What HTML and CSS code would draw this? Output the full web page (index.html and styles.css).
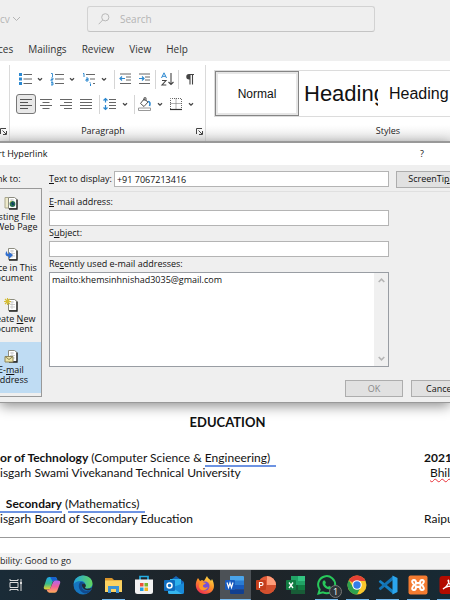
FILE: index.html
```html
<!DOCTYPE html>
<html lang="en">
<head>
<meta charset="utf-8">
<title>Insert Hyperlink</title>
<link rel="stylesheet" href="styles.css">
</head>
<body>
<svg width="0" height="0" class="defs" aria-hidden="true">
  <defs>
    <symbol id="chev" viewBox="0 0 6 5"><path d="M1 1.2l2 2 2-2" fill="none" stroke="#444" stroke-width="1.3"/></symbol>
    <symbol id="launch" viewBox="0 0 7 7"><path d="M.5 6V.5H6M2.5 2.5l3.500 3.500M6.500 3v3.500H3" fill="none" stroke="#444"/></symbol>
    <symbol id="page" viewBox="0 0 14 14"><path d="M4.500 1.500h6l2.500 2v9H4.500z" fill="#fff" stroke="#8c8c80"/><path d="M13 3.500V13H5" fill="none" stroke="#222" stroke-width="1.300"/><path d="M6 4h4M6 6.500h5M6 9h5M8 3v8" stroke="#bbb" stroke-width=".7"/></symbol>
  </defs>
</svg>
<div class="screen">
  <header class="titlebar">
    <div class="titlebar-row">
      <span class="doc-name">cv <svg width="9" height="6" viewBox="0 0 9 6"><path d="M1 1l3.500 3.500L8 1" fill="none" stroke="#b4b4b4"/></svg></span>
      <label class="search">
        <svg width="12" height="12" viewBox="0 0 12 12"><circle cx="7.300" cy="4.300" r="3.600" fill="none" stroke="#b8b8b8"/><path d="M4.700 7L.7 11.200" stroke="#b8b8b8"/></svg>
        <input type="search" placeholder="Search" aria-label="Search">
      </label>
    </div>
    <nav class="tabs">
      <a href="#">ces</a><a href="#">Mailings</a><a href="#">Review</a><a href="#">View</a><a href="#">Help</a>
    </nav>
  </header>

  <section class="ribbon">
    <div class="group-edge"><svg width="7" height="7"><use href="#launch"/></svg></div>
    <div class="group paragraph">
      <div class="tools">
        <button class="split" aria-label="Bullets"><svg width="14" height="14" viewBox="0 0 14 14"><path d="M1 1h3v3H1zM1 5.500h3v3H1zM1 10h3v3H1z" fill="#2b88d0"/><path d="M5.500 2.500H14M5.500 7H14M5.500 11.500H14" stroke="#666"/></svg><svg width="6" height="5"><use href="#chev"/></svg></button>
        <button class="split" aria-label="Numbering"><svg width="14" height="14" viewBox="0 0 14 14"><path d="M1 1.500h1.500V5M1 6h2v1.500H1V9h2M1 10.500h2V13H1M1 12h2" fill="none" stroke="#2b88d0" stroke-width=".9"/><path d="M5 2.500h9M5 7h9M5 11.500h9" stroke="#666"/></svg><svg width="6" height="5"><use href="#chev"/></svg></button>
        <button class="split" aria-label="Multilevel list"><svg width="14" height="14" viewBox="0 0 14 14"><path d="M1 1.500h1V5M4 6h2v3H4V7.500h2M8 10v.8M8.500 11.500V14" fill="none" stroke="#2b88d0"/><path d="M4 2.500h9M8 7h5M11 11.500h2" stroke="#666"/></svg><svg width="6" height="5"><use href="#chev"/></svg></button>
        <i class="sep"></i>
        <button aria-label="Decrease indent"><svg width="14" height="14" viewBox="0 0 14 14"><path d="M1 2h11M7 5h5M7 8h5M1 11.500h11" stroke="#666"/><path d="M6 6.500H1M3 4.500l-2 2 2 2" fill="none" stroke="#2b88d0" stroke-width="1.200"/></svg></button>
        <button aria-label="Increase indent"><svg width="14" height="14" viewBox="0 0 14 14"><path d="M2 2h11M8 5h5M8 8h5M2 11.500h11" stroke="#666"/><path d="M2 6.500h5M5 4.500l2 2-2 2" fill="none" stroke="#2b88d0" stroke-width="1.200"/></svg></button>
        <i class="sep"></i>
        <button aria-label="Sort"><svg width="14" height="14" viewBox="0 0 14 14"><path d="M1.500 6L4 .8 6.500 6M2.300 4.300h3.400" fill="none" stroke="#2b88d0"/><path d="M2 8.500h4L2 13h4.300M11 1v11.500M8.500 10l2.500 2.500 2.500-2.500" fill="none" stroke="#444" stroke-width="1.100"/></svg></button>
        <i class="sep"></i>
        <button class="pilcrow" aria-label="Show marks"><svg width="10" height="12" viewBox="0 0 10 12"><path d="M5 1.500v10M7.500 1.500v10M4 1.500h5" fill="none" stroke="#444" stroke-width="1.100"/><path d="M5 1H4a2.600 2.600 0 0 0 0 5.500h1z" fill="#444"/></svg></button>
      </div>
      <div class="tools tools-second">
        <div class="aligns">
          <button class="on" aria-label="Align left"><svg width="12" height="12" viewBox="0 0 12 12"><path d="M0 1.500h12M0 4.500h8M0 7.500h12M0 10.500h8" stroke="#555"/></svg></button>
          <button aria-label="Center"><svg width="12" height="12" viewBox="0 0 12 12"><path d="M0 1.500h12M2.500 4.500h7M0 7.500h12M2.500 10.500h7" stroke="#666"/></svg></button>
          <button aria-label="Align right"><svg width="12" height="12" viewBox="0 0 12 12"><path d="M0 1.500h12M4 4.500h8M0 7.500h12M4 10.500h8" stroke="#666"/></svg></button>
          <button aria-label="Justify"><svg width="12" height="12" viewBox="0 0 12 12"><path d="M0 1.500h12M0 4.500h12M0 7.500h12M0 10.500h12" stroke="#666"/></svg></button>
        </div>
        <i class="sep"></i>
        <button class="split" aria-label="Line spacing"><svg width="14" height="14" viewBox="0 0 14 14"><path d="M2.500 1.500v4M2.500 8v4.500M.5 3.500l2-2 2 2M.5 10.500l2 2 2-2" fill="none" stroke="#2b88d0" stroke-width="1.200"/><path d="M6 2.500h7M6 5.500h7M6 8.500h7M6 11.500h7" stroke="#666"/></svg><svg width="6" height="5"><use href="#chev"/></svg></button>
        <i class="sep"></i>
        <button class="split" aria-label="Shading"><svg width="14" height="14" viewBox="0 0 14 14"><path d="M6 2L2.500 6.500 6 9.500l4-4.500zM6 4V.8h2V4" fill="none" stroke="#555"/><path d="M10 4.500c2 0 2.500 2 1.500 4.500" fill="none" stroke="#2b88d0" stroke-width="1.600"/><path d="M.5 11h12v2.500H.5z" fill="#fff" stroke="#999"/></svg><svg width="6" height="5"><use href="#chev"/></svg></button>
        <button class="split" aria-label="Borders"><svg width="14" height="14" viewBox="0 0 14 14"><path d="M1.500 12V1.500h11V12M7 1.500V12M1.500 6.500h11" fill="none" stroke="#666" stroke-dasharray="1 1"/><path d="M1 12.500h12" stroke="#333" stroke-width="1.200"/></svg><svg width="6" height="5"><use href="#chev"/></svg></button>
      </div>
      <div class="caption"><span>Paragraph</span><svg width="7" height="7"><use href="#launch"/></svg></div>
    </div>
    <div class="group styles">
      <div class="gallery">
        <button class="style normal">Normal</button>
        <button class="style h1">Heading</button>
        <button class="style h2">Heading</button>
      </div>
      <div class="caption styles-caption"><span>Styles</span></div>
    </div>
  </section>

  <section class="dialog" role="dialog" aria-label="Insert Hyperlink">
    <div class="dialog-title"><span>rt Hyperlink</span><button aria-label="Help">?</button></div>
    <div class="dialog-body">
      <div class="side">
        <div class="side-label">Link to:</div>
        <div class="places">
          <button><svg width="14" height="14" viewBox="0 0 14 14"><path d="M1 1.500h3l1 1h5V12H1z" fill="#eeeacb" stroke="#aaa78c"/><use href="#page"/><circle cx="8.500" cy="8" r="2.900" fill="#2a7050"/><path d="M7 6l2 .5 1.500 2-2 1z" fill="#113a68"/><path d="M5.700 6.500l2-1.500" stroke="#cdd54b"/></svg><span>Existing File<br>or Web Page</span></button>
          <button><svg width="14" height="14" viewBox="0 0 14 14"><use href="#page"/><path d="M3 4C0 7 2 10 5 9.500V12l4-4-4-3v2C3.500 7.500 3 6 3 4z" fill="#2f6ed0"/></svg><span>Pl<u>a</u>ce in This<br>Document</span></button>
          <button><svg width="14" height="14" viewBox="0 0 14 14"><use href="#page"/><path d="M3.500 0v7M0 3.500h7M1 1l5 5M6 1L1 6" stroke="#d5bd35" stroke-width="1.100"/></svg><span>Create <u>N</u>ew<br>Document</span></button>
          <button class="current"><svg width="14" height="14" viewBox="0 0 14 14"><use href="#page"/><path d="M1 7.500h8V13H1z" fill="#eee5a8" stroke="#8d865b"/><path d="M1 7.500l4 3 4-3" fill="none" stroke="#8d865b"/></svg><span>E-<u>m</u>ail<br>Address</span></button>
        </div>
      </div>
      <form class="form">
        <div class="display-row">
          <label for="display"><u>T</u>ext to display:</label>
          <input id="display" type="text" value="+91 7067213416">
          <div class="tip"><button type="button">ScreenTi<u>p</u>...</button></div>
        </div>
        <div class="fields">
          <label for="email"><u>E</u>-mail address:</label>
          <input id="email" type="text">
          <label for="subject">S<u>u</u>bject:</label>
          <input id="subject" type="text">
          <label id="recent">Re<u>c</u>ently used e-mail addresses:</label>
          <div class="listbox">
            <ul role="listbox" aria-labelledby="recent"><li role="option">mailto:khemsinhnishad3035@gmail.com</li></ul>
            <div class="scroll"><svg width="7" height="5" viewBox="0 0 7 5"><path d="M.7 4l2.800-2.800L6.300 4" fill="none" stroke="#b5b5b5" stroke-width="1.600"/></svg><svg width="7" height="5" viewBox="0 0 7 5"><path d="M.7 1l2.800 2.800L6.300 1" fill="none" stroke="#b5b5b5" stroke-width="1.600"/></svg></div>
          </div>
        </div>
        <div class="actions"><button type="button" disabled>OK</button><button type="button">Cancel</button></div>
      </form>
    </div>
  </section>

  <main class="document">
    <h1>EDUCATION</h1>
    <div class="entry">
      <div class="line"><span><b>or of Technology</b> (Computer Science &amp; <span class="gram">Engineering)&nbsp; </span></span><b class="when">2021</b></div>
      <div class="line"><span>isgarh Swami Vivekanand Technical University</span><span class="where"><span class="spell">Bhilai</span></span></div>
    </div>
    <div class="entry">
      <div class="line"><span><b class="gram">&nbsp; Secondary</b> (<span class="gram">Mathematics)&nbsp; </span></span></div>
      <div class="line"><span>isgarh Board of Secondary Education</span><span class="when">Raipur</span></div>
    </div>
  </main>
  <footer class="status">bility: Good to go</footer>

  <nav class="taskbar">
    <button aria-label="Task view"><svg width="16" height="16" viewBox="0 0 16 16"><path d="M2 5.500h8v5H2zM2 2v1.500h8V2M2 14v-1.500h8V14M13 2v3M13 8v6" fill="none" stroke="#ddd"/><path d="M12 5h2v2.500h-2z" fill="#ddd"/></svg></button>
    <button aria-label="Copilot"><svg width="18" height="18" viewBox="0 0 20 20"><defs><linearGradient id="c1" x2="0" y2="1"><stop stop-color="#20a5ee"/><stop offset=".55" stop-color="#38bd87"/><stop offset="1" stop-color="#f5d22e"/></linearGradient><linearGradient id="c2" x2="0" y2="1"><stop stop-color="#ae65ef"/><stop offset=".5" stop-color="#f0619a"/><stop offset="1" stop-color="#ffab59"/></linearGradient></defs><path d="M7 1h6q2 0 2.500 2l.5 2h-3q-2 0-2.500 2L9 12q-1 3-3 3H3c-2 0-2.500-1.500-2-3L4 3q.8-2 3-2z" fill="url(#c1)"/><path d="M8 1h5q2 0 2.500 2l.5 2h-3q-1.500 0-2.500 1z" fill="#1861cf"/><path d="M14 5h2.500C19 5 19.500 6.500 19 8l-3 8q-1 2.500-3 2.500H7q-2 0-2.500-2L4 15h2q2 0 3-3l2-5q.7-2 3-2z" fill="url(#c2)"/></svg></button>
    <button aria-label="Edge"><svg width="20" height="20" viewBox="0 0 20 20"><defs><linearGradient id="e1"><stop stop-color="#21a3df"/><stop offset="1" stop-color="#62d65f"/></linearGradient></defs><circle cx="10" cy="10" r="9.500" fill="#1675bf"/><path d="M.6 9.500C1 4 5 .5 10 .5c6 0 9.500 4 9.500 8 0 3.500-2.500 5-5.500 5-2.500 0-3-1-2-2 1.500-3-1-5.500-4-5.500C4 6 1.500 7.500.6 9.500z" fill="url(#e1)"/><path d="M7.500 7C4 10 6 17 12 18.500c3 0 5-1.500 6-3.500-5 2-10 0-9-5 .2-1 1-1.700 2-2-1-1-2.500-1.300-3.500-1z" fill="#114a8d"/><path d="M9 9.500c-.5 4 4 7 9 5 .8-1 1-2 1-2-2 1.500-7 1.700-7 0 1.500-1 1-3-.500-4-1 0-2 .4-2.500 1z" fill="#202a33"/></svg></button>
    <button class="open" aria-label="Explorer"><svg width="20" height="20" viewBox="0 0 20 20"><path d="M2 3h7l2 2h8v3H2z" fill="#d9952b"/><path d="M2 5.500h17V17H2z" fill="#fbd262"/><path d="M5 11h11v7h-3v-4H8v4H5z" fill="#3b93d7"/></svg></button>
    <button aria-label="Store"><svg width="20" height="20" viewBox="0 0 20 20"><path d="M6 5V1.500h8V5" fill="none" stroke="#24afe5" stroke-width="1.700"/><path d="M1 4.500h18v12q0 2.500-2.500 2.500h-13Q1 19 1 16.500z" fill="#f2f2f2"/><path d="M6 8h3.500v3.500H6z" fill="#ec5238"/><path d="M10.500 8H14v3.500h-3.500z" fill="#7bb72f"/><path d="M6 12.500h3.500V16H6z" fill="#219ee1"/><path d="M10.500 12.500H14V16h-3.500z" fill="#f3b520"/></svg></button>
    <button aria-label="Outlook"><svg width="20" height="20" viewBox="0 0 20 20"><path d="M4 7l8-6 8 6v10q0 2-2 2H6q-2 0-2-2z" fill="#1465b7"/><path d="M6 4h11v9H6z" fill="#2db1ec"/><path d="M4 14l16-6v9q0 2-2 2H6q-2 0-2-2z" fill="#198bd9"/><path d="M4 10l14 9H6q-2 0-2-2z" fill="#36b6ee"/><rect y="5" width="11" height="11" rx="1" fill="#0f6cbd"/><circle cx="5.500" cy="10.500" r="2.500" fill="none" stroke="#fff" stroke-width="1.500"/></svg></button>
    <button aria-label="Firefox"><svg width="20" height="20" viewBox="0 0 20 20"><defs><linearGradient id="f1" x1=".8" y1="0" x2=".2" y2="1"><stop stop-color="#ffe34b"/><stop offset=".45" stop-color="#ff9227"/><stop offset="1" stop-color="#ed2455"/></linearGradient></defs><path d="M3 3l2 3 2-1 2 1 3-5c1 3 3 3 4 5l1-2c4 7 2 15-7 15C2 19-2 11 3 3z" fill="url(#f1)"/><circle cx="10" cy="11" r="4.500" fill="#7651d9"/><path d="M5 7c3-1 4 1 6 1-1 2-3 1-3 3 0 2 3 2 5 1-2 5-9 4-9-1z" fill="#ff9829"/></svg></button>
    <button class="open active" aria-label="Word"><svg width="20" height="20" viewBox="0 0 20 20"><path d="M5 1h13q1 0 1 1v4H5z" fill="#4aa4eb"/><path d="M5 5.500h14V10H5z" fill="#2b7cd3"/><path d="M5 10h14v4.500H5z" fill="#185abd"/><path d="M5 14.500h14V18q0 1-1 1H6q-1 0-1-1z" fill="#103f91"/><rect y="5" width="10" height="10" rx="1" fill="#185abd"/><path d="M2 7.500l1.500 5L5 8l1.500 4.500 1.500-5" fill="none" stroke="#fff" stroke-width="1.200"/></svg></button>
    <button aria-label="PowerPoint"><svg width="20" height="20" viewBox="0 0 20 20"><circle cx="11" cy="10" r="9" fill="#e45b38"/><path d="M11 1a9 9 0 0 1 9 9h-9z" fill="#ff9d7a"/><path d="M2 10h18a9 9 0 0 1-18 0" fill="#d3502e"/><rect y="5" width="10" height="10" rx="1" fill="#c43e1c"/><path d="M3.500 13V7.500h2q1.500 0 1.500 1.500t-1.500 1.500h-2" fill="none" stroke="#fff" stroke-width="1.200"/></svg></button>
    <button aria-label="Excel"><svg width="20" height="20" viewBox="0 0 20 20"><path d="M5 1h14v18H5z" fill="#21a366"/><path d="M12 1h7v5h-7z" fill="#33c481"/><path d="M5 10h14v9H5z" fill="#185c37"/><path d="M12 10h7v5h-7z" fill="#107c41"/><rect y="5" width="10" height="10" rx="1" fill="#107c41"/><path d="M3 7.500l4 5.500M7 7.500L3 13" stroke="#fff" stroke-width="1.300"/></svg></button>
    <button class="open badge-host" aria-label="WhatsApp"><svg width="20" height="20" viewBox="0 0 20 20"><path d="M1.500 18.500l1.200-4A8.500 8.500 0 1 1 6 17.300z" fill="none" stroke="#28c85b" stroke-width="2"/><path d="M6.500 5.500l1.500 0 1 2.500-1 1q1 2 3 3l1-1 2.500 1c0 2-2 3-4 2-3-1-5-4-5-6q0-2 1-2.500z" fill="#28c85b"/></svg><span class="badge">1</span></button>
    <button class="open" aria-label="Chrome"><svg width="20" height="20" viewBox="0 0 20 20"><circle cx="10" cy="10" r="9.500" fill="#f9c62c"/><path d="M10 10L1.800 5.200A9.500 9.500 0 0 1 18.200 5.200L18.200 6H10z" fill="#e64235"/><path d="M1.800 5.200A9.500 9.500 0 0 0 10 19.500L13.800 12 6 12z" fill="#2da14e"/><circle cx="10" cy="10" r="4.800" fill="#fff"/><circle cx="10" cy="10" r="3.700" fill="#347de8"/></svg></button>
    <button class="open" aria-label="Visual Studio Code"><svg width="20" height="20" viewBox="0 0 20 20"><path d="M1 6l1.500-1L15 15v4L.8 7z" fill="#1480c5"/><path d="M1 14l1.500 1.200L15 5V1L.8 13z" fill="#1473b3"/><path d="M14.500.5L19.500 3v14l-5 2.500z" fill="#2ba5ed"/></svg></button>
    <button class="open" aria-label="XAMPP"><svg width="20" height="20" viewBox="0 0 20 20"><rect x=".5" y=".5" width="19" height="19" rx="2" fill="#f47b30"/><path d="M7 10c-3-1-4-5-1-5 2 0 2 2 2 3h4c0-1 0-3 2-3 3 0 2 4-1 5 3 1 4 5 1 5-2 0-2-2-2-3H8c0 1 0 3-2 3-3 0-2-4 1-5z" fill="none" stroke="#fff" stroke-width="2"/></svg></button>
    <button class="open" aria-label="Acrobat"><svg width="20" height="20" viewBox="0 0 20 20"><rect x=".5" y="1" width="19" height="18" rx="3" fill="#b30b00"/><path d="M4 14c3-1 7-7 5.500-9-1.500 0 1 6 6 6.500-3-1-9 0-11.500 2.500z" fill="none" stroke="#fff" stroke-width="1.200"/></svg></button>
  </nav>
</div>
</body>
</html>
```
FILE: styles.css
```css
* { box-sizing: border-box; }
body {
  margin: 0;
  background: #fff;
  color: #222;
  font: 10px/12px "Open Sans", "Noto Sans", sans-serif;
}
button, input {
  margin: 0;
  padding: 0;
  border: 0;
  border-radius: 0;
  background: none;
  color: inherit;
  font: inherit;
  outline: 0;
}
a { color: inherit; text-decoration: none; }
svg { display: block; flex: none; }
.defs { position: absolute; }
.screen {
  display: flex;
  flex-direction: column;
  min-height: 100vh;
  overflow: hidden;
}

/* Title bar and tabs */
.titlebar { background: #efefef; color: #333; }
.titlebar-row {
  display: flex;
  align-items: center;
  padding-top: 6px;
}
.doc-name {
  display: flex;
  align-items: center;
  gap: 2px;
  width: 87px;
  color: #b4b4b4;
}
.search {
  display: flex;
  align-items: center;
  gap: 10px;
  flex: 1;
  height: 26px;
  margin-right: 75px;
  padding-left: 10px;
  border: 1px solid #d2d2d2;
  border-bottom-color: #c4c4c4;
  border-radius: 3px;
}
.search input { flex: 1; min-width: 0; }
.search input::placeholder { color: #b4b4b4; opacity: 1; }
.tabs {
  display: flex;
  gap: 15px;
  margin-left: -2px;
  padding: 11px 0 6px;
}

/* Ribbon */
.ribbon {
  display: flex;
  height: 80px;
  padding-top: 4px;
  background: linear-gradient(#fff 80%, #e9e9e9);
}
.group-edge {
  display: flex;
  align-items: flex-end;
  width: 10px;
  padding: 0 2px 6px 0;
  border-right: 1px solid #dadada;
}
.paragraph {
  width: 196px;
  border-right: 1px solid #dadada;
}
.tools {
  display: flex;
  align-items: center;
  gap: 4px;
  height: 20px;
  margin-top: 4px;
  padding-left: 8px;
}
.tools-second { gap: 3px; margin-top: 5px; padding-left: 6px; }
.split {
  display: flex;
  align-items: center;
  gap: 5px;
  width: 28px;
}
.sep { width: 1px; height: 19px; background: #d5d5d5; }
.pilcrow { padding-left: 2px; }
.aligns { display: flex; }
.aligns button {
  display: grid;
  place-items: center;
  width: 20px;
  height: 20px;
}
.aligns .on {
  border: 1px solid #777;
  border-radius: 3px;
  background: #e8e8e8;
}
.caption {
  display: flex;
  align-items: center;
  margin-top: 11px;
  padding-right: 2px;
  font-size: 9px;
}
.caption span { flex: 1; text-align: center; }
.styles {
  flex: 1;
  min-width: 0;
  padding: 5px 0 0 8px;
}
.gallery {
  display: flex;
  height: 47px;
  overflow: hidden;
  border: solid #dcdcdc;
  border-width: 1px 0 1px 1px;
}
.style {
  flex: none;
  overflow: hidden;
  color: #111;
  font-family: "Liberation Sans", Arial, sans-serif;
  white-space: nowrap;
}
.normal {
  width: 84px;
  border: 1px solid #858585;
  box-shadow: inset 0 0 0 2px #e6e6e6;
  font-size: 12px;
}
.h1 { width: 74px; margin-left: 5px; font-size: 22px; line-height: 30px; text-align: left; }
.h2 { margin-left: 11px; font-size: 16px; }
.styles-caption { margin-top: 8px; padding-left: 114px; }

/* Hyperlink dialog */
.dialog {
  position: relative;
  border: solid #999;
  border-width: 2px 0 1px;
  background: #efefef;
  box-shadow: 0 3px 12px rgba(0, 0, 0, .45);
  font-size: 9px;
  color: #111;
}
.dialog-title {
  display: flex;
  align-items: center;
  justify-content: space-between;
  height: 22px;
  margin-left: -2px;
  padding-right: 26px;
  background: #fff;
}
.dialog-body { display: flex; gap: 7px; padding: 6px 0 5px; }
.side {
  display: flex;
  flex-direction: column;
  width: 62px;
  margin-left: -20px;
}
.side-label { padding: 2px 0 3px 10px; }
.places {
  flex: 1;
  border: 1px solid #999;
}
.places button {
  display: flex;
  flex-direction: column;
  align-items: center;
  width: 100%;
  height: 51px;
  padding-top: 7px;
  line-height: 10px;
  white-space: nowrap;
}
.places span { margin-top: 2px; }
.places .current { background: #bfdcf3; }
.form { flex: 1; min-width: 0; }
.display-row {
  display: flex;
  align-items: center;
  gap: 2px;
  height: 21px;
  padding-bottom: 4px;
  border-bottom: 1px solid #e0e0e0;
}
.form input {
  height: 16px;
  border: 1px solid #b4b4b4;
  background: #fff;
  padding: 0 2px;
}
.display-row input { flex: 1; min-width: 0; }
.tip { width: 59px; padding-left: 5px; overflow: hidden; }
.tip button, .actions button {
  height: 17px;
  border: 1px solid #adadad;
  background: #e1e1e1;
}
.tip button { width: 73px; }
.fields {
  display: flex;
  flex-direction: column;
  margin-right: 61px;
  padding-top: 4px;
}
.fields label { height: 14px; line-height: 12px; }
.fields input { margin-bottom: 1px; }
.listbox {
  display: flex;
  height: 95px;
  border: 1px solid #999da3;
  background: #fff;
}
.listbox ul { flex: 1; margin: 0; padding: 1px 2px; list-style: none; }
.scroll {
  display: flex;
  flex-direction: column;
  justify-content: space-between;
  align-items: center;
  width: 14px;
  padding: 5px 0;
  background: #f0f0f0;
}
.actions {
  display: flex;
  justify-content: flex-end;
  gap: 8px;
  margin: 13px -19px 0 0;
}
.actions button { width: 58px; }
.actions button:disabled { color: #888; }

/* Document page */
.document {
  flex: 1;
  border-bottom: 1px solid #999;
  color: #111;
  font: 12px/15px Lato, "Open Sans", sans-serif;
}
h1 {
  margin: 11px 0 20px;
  padding-left: 5px;
  font-size: 13px;
  line-height: 16px;
  text-align: center;
}
.entry { margin-bottom: 16px; }
.entry:last-child { margin-bottom: 11px; }
.line { display: flex; justify-content: space-between; white-space: nowrap; }
.when, .where { width: 26px; overflow-x: clip; }
.where { width: 20px; }
.gram { border-bottom: 2px solid #6d93e2; white-space: pre; }
.spell { text-decoration: underline wavy #e8323a 1px; }

/* Status bar and taskbar */
.status {
  margin-top: 15px;
  padding: 2px 0;
  border-bottom: 1px solid #ccc;
  background: #f3f3f3;
  font-size: 9px;
}
.taskbar {
  display: grid;
  grid-template-columns: 37px repeat(14, 1fr);
  height: 31px;
  margin-right: -14px;
  background: linear-gradient(90deg, #1a2b37, #1f2326 50%, #172a35);
}
.taskbar button {
  display: grid;
  place-items: center;
  padding-bottom: 1px;
}
.taskbar button:first-child { padding-right: 5px; }
.taskbar .open {
  background: linear-gradient(#76b9ed, #76b9ed) center bottom / 23px 2px no-repeat;
}
.taskbar .active { background: linear-gradient(#76b9ed, #76b9ed) bottom / 100% 2px no-repeat #4c5156; }
.badge-host { position: relative; }
.badge {
  position: absolute;
  right: 0;
  bottom: 3px;
  width: 13px;
  height: 13px;
  border: 1px solid #777;
  border-radius: 50%;
  background: #30363a;
  color: #fff;
  font-size: 9px;
  line-height: 11px;
  text-align: center;
}
```
